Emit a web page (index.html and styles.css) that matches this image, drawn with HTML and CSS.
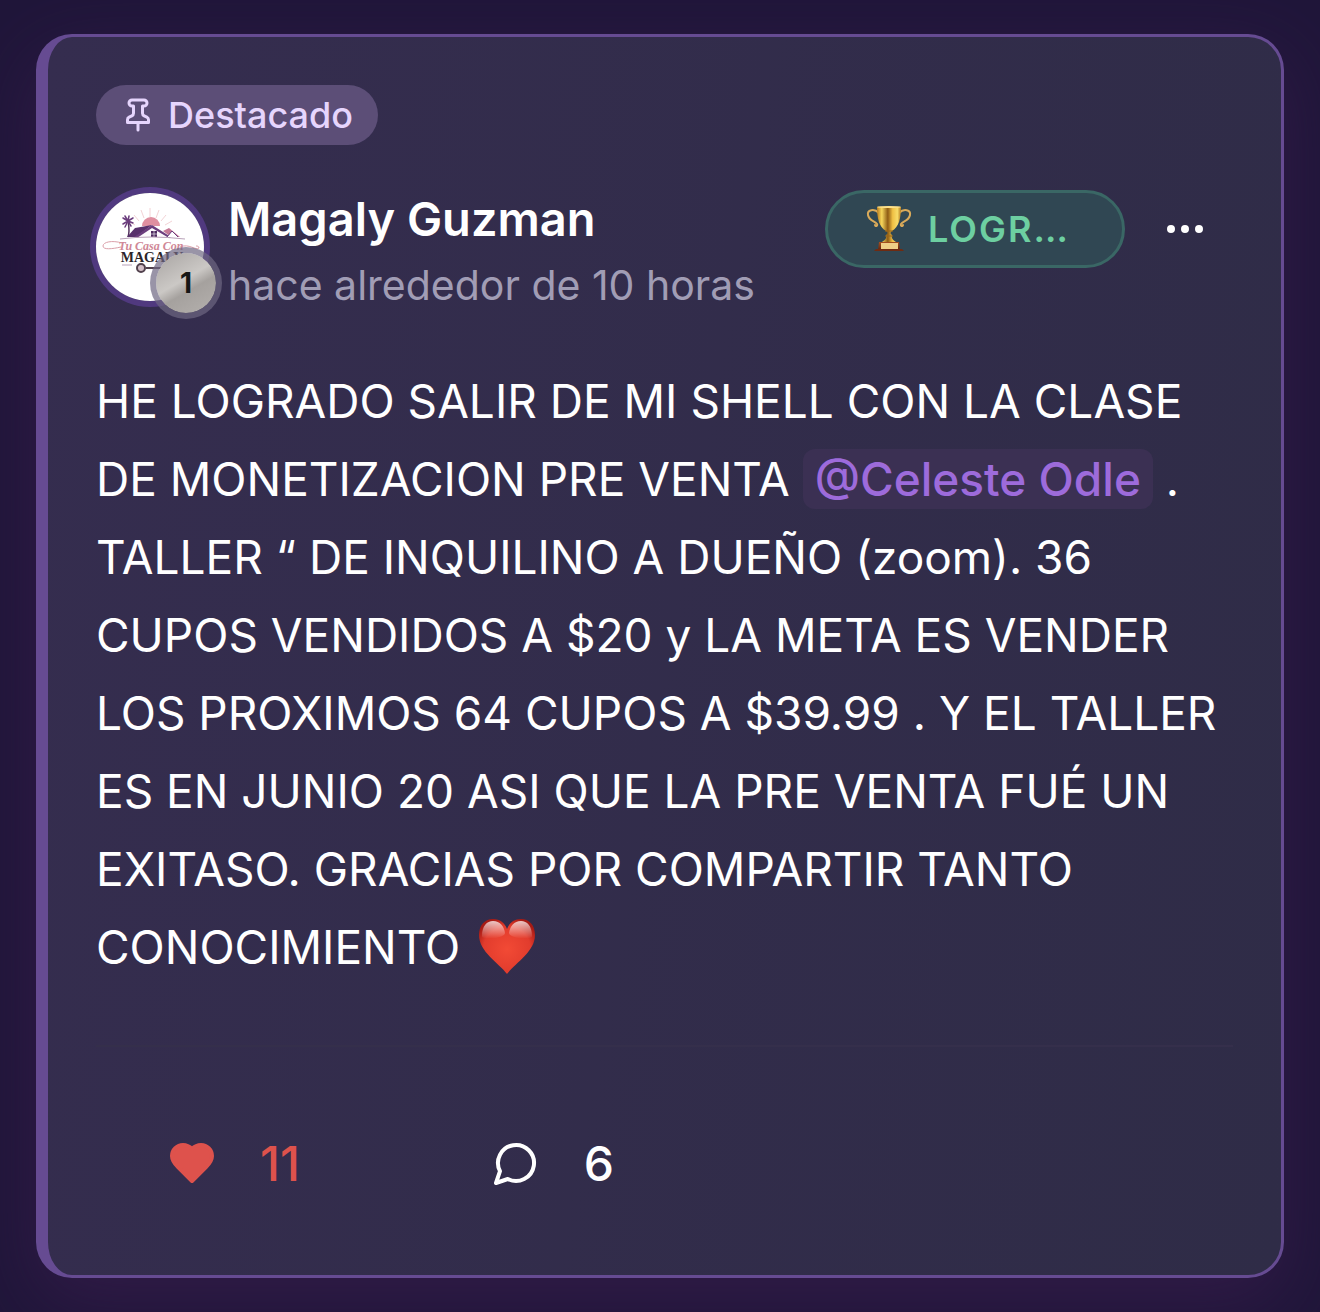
FILE: index.html
```html
<!DOCTYPE html>
<html lang="es">
<head>
  <meta charset="UTF-8">
  <meta name="viewport" content="width=device-width, initial-scale=1.0">
  <title>Publicación destacada</title>
  <link rel="stylesheet" href="styles.css">
</head>
<body>
  <article class="post">
    <div class="pinned">
      <svg class="pin-icon" viewBox="0 0 24 24" aria-hidden="true">
        <path d="M12 17v5"/>
        <path d="M5 17h14v-1.76a2 2 0 0 0-1.11-1.79l-1.78-.9A2 2 0 0 1 15 10.76V6h1a2 2 0 0 0 0-4H8a2 2 0 0 0 0 4h1v4.76a2 2 0 0 1-1.11 1.79l-1.78.9A2 2 0 0 0 5 15.24Z"/>
      </svg>
      <span>Destacado</span>
    </div>

    <header class="post-header">
      <div class="avatar">
        <svg class="avatar-img" viewBox="0 0 108 108" role="img" aria-label="Tu Casa Con Magaly">
          <circle cx="54" cy="54" r="54" fill="#fff"/>
          <!-- sol -->
          <g stroke="#f3d3d6" stroke-width="1">
            <path d="M54 24v-9M48 25l-3-8M60 25l3-8M43 28l-5-6M65 28l5-6M39 32l-7-4M69 32l7-4"/>
          </g>
          <path d="M46 33a9 9 0 0 1 18 0z" fill="#df8fa0"/>
          <!-- palmera -->
          <path d="M32 44c2-6 1-10 0-16" fill="none" stroke="#553460" stroke-width="1.5"/>
          <path d="M32 28l-5-3M32 28l-5 3M32 28l-3 6M32 28l3 5M32 28l5 2M32 28l5-3M32 28l1-5M32 28l-3-5" fill="none" stroke="#6b3d7d" stroke-width="1.5" stroke-linecap="round"/>
          <!-- casa -->
          <path d="M31 44l8-9 17-3-14 12z" fill="#58306b"/>
          <path d="M56 32L40 44h33z" fill="#fdfafc"/>
          <path d="M38 44l18-12 19 12-2 1-17-10-15 10z" fill="#6b3d7d"/>
          <path d="M67 38l6-3 11 9H75z" fill="#c47896"/>
          <path d="M71 44l5-6 6 6" fill="#fff" stroke="#6b3d7d"/>
          <path d="M55 38h6v6h-6z" fill="#4e2b60"/>
          <path d="M58 38v6M55 41h6" stroke="#fff" stroke-width=".6"/>
          <path d="M24 46q30-4 65 0" fill="none" stroke="#b9a2b9" stroke-width="1"/>
          <!-- rótulo -->
          <path d="M26 50c-10-3-19-1-19 3 0 4 9 3 18 1M84 54c9-4 16 4 19 1 0-2-2-2-3-2" fill="none" stroke="#dba0aa" stroke-width="1"/>
          <text class="logo-script" x="55" y="57" text-anchor="middle">Tu Casa Con</text>
          <text class="logo-name" x="56" y="69" text-anchor="middle">MAGALY</text>
          <path d="M26 72h10M68 73h12" stroke="#b9a2b9"/>
          <circle cx="45" cy="75" r="4" fill="#d3c0c8" stroke="#51414d" stroke-width="2"/>
          <path d="M50 75h22" stroke="#51414d" stroke-width="2"/>
        </svg>
        <span class="level">1</span>
      </div>
      <div class="author">
        <h2 class="name">Magaly Guzman</h2>
        <time class="time">hace alrededor de 10 horas</time>
      </div>
      <div class="category">
        <svg class="trophy" viewBox="0 0 48 48" aria-hidden="true">
          <defs>
            <linearGradient id="gold" x1="0" x2="1" y1="0" y2="0">
              <stop offset="0" stop-color="#b87a1c"/>
              <stop offset=".2" stop-color="#f6d75c"/>
              <stop offset=".45" stop-color="#8f5c14"/>
              <stop offset=".65" stop-color="#efc044"/>
              <stop offset=".85" stop-color="#f8dc68"/>
              <stop offset="1" stop-color="#b47a1e"/>
            </linearGradient>
            <linearGradient id="wood" x1="0" x2="0" y1="0" y2="1">
              <stop offset="0" stop-color="#a8501f"/>
              <stop offset="1" stop-color="#5e230e"/>
            </linearGradient>
          </defs>
          <path d="M14 8C9 3 2 5 3 10c1 6 7 6 9 9 1 2-2 3-2 1M34 8c5-5 12-3 11 2-1 6-7 6-9 9-1 2 2 3 2 1" fill="none" stroke="#d9aa5a" stroke-width="2" stroke-linecap="round"/>
          <path d="M12 2h24c0 11-2 20-9 24-2 1-2 3 0 4-1 3 1 5 4 7H17c3-2 5-4 4-7 2-1 2-3 0-4-7-4-9-13-9-24z" fill="url(#gold)"/>
          <ellipse cx="24" cy="2" rx="12" ry="1" fill="#ffe18a"/>
          <path d="M20 26h8M20 31h8" stroke="#9c671b" stroke-width="1"/>
          <path d="M14 37h20l1 8H13z" fill="url(#wood)"/>
          <path d="M16 38h17v6H16z" fill="#efcf86"/>
          <path d="M11 44h26l2 2H9z" fill="#6f2b12"/>
        </svg>
        <span>LOGR…</span>
      </div>
      <button class="more" type="button" aria-label="Más opciones">
        <svg class="icon" viewBox="0 0 24 24" aria-hidden="true">
          <circle cx="5" cy="12" r="1"/>
          <circle cx="12" cy="12" r="1"/>
          <circle cx="19" cy="12" r="1"/>
        </svg>
      </button>
    </header>

    <p class="content">
      HE LOGRADO SALIR DE MI SHELL CON LA CLASE DE MONETIZACION PRE VENTA <a class="mention" href="#">@Celeste Odle</a> . TALLER “ DE INQUILINO A DUEÑO (zoom). 36 CUPOS VENDIDOS A $20 y LA META ES VENDER LOS PROXIMOS 64 CUPOS A $39.99 . Y EL TALLER ES EN JUNIO 20 ASI QUE LA PRE VENTA FUÉ UN EXITASO. GRACIAS POR COMPARTIR TANTO CONOCIMIENTO
      <svg class="emoji" viewBox="0 0 60 60" role="img" aria-label="corazón">
        <defs>
          <radialGradient id="heartFill" cx=".5" cy=".55" r=".6">
            <stop offset="0" stop-color="#f24a35"/>
            <stop offset=".7" stop-color="#e23c2d"/>
            <stop offset="1" stop-color="#a61a14"/>
          </radialGradient>
          <linearGradient id="heartShine" x1="0" x2="0" y1="0" y2="1">
            <stop offset="0" stop-color="#fff" stop-opacity=".75"/>
            <stop offset="1" stop-color="#fff" stop-opacity="0"/>
          </linearGradient>
        </defs>
        <path d="M30 58C22 47 2 36 2 19 2 9 8 3 16 3c7 0 12 4 14 10 2-6 7-10 14-10 8 0 14 6 14 16 0 17-20 28-28 39z" fill="url(#heartFill)"/>
        <path d="M5 20C5 10 10 5 16 5c7 0 11 5 12 12 0 5-23 8-23 3zM55 20C55 10 50 5 44 5c-7 0-11 5-12 12 0 5 23 8 23 3z" fill="url(#heartShine)"/>
      </svg>
    </p>

    <footer class="actions">
      <button class="action liked" type="button" aria-label="Me gusta">
        <svg class="icon" viewBox="0 0 24 24" aria-hidden="true">
          <path d="M19 14c1.49-1.46 3-3.21 3-5.5A5.5 5.5 0 0 0 16.5 3c-1.76 0-3 .5-4.5 2-1.5-1.5-2.74-2-4.5-2A5.5 5.5 0 0 0 2 8.5c0 2.3 1.5 4.05 3 5.5l7 7Z"/>
        </svg>
        <span>11</span>
      </button>
      <button class="action" type="button" aria-label="Comentarios">
        <svg class="icon" viewBox="0 0 24 24" aria-hidden="true">
          <path d="M7.9 20A9 9 0 1 0 4 16.1L2 22Z"/>
        </svg>
        <span>6</span>
      </button>
    </footer>
  </article>
</body>
</html>
```

FILE: styles.css
```css
* {
  box-sizing: border-box;
}
body {
  margin: 0;
  padding: 34px 36px;
  background: #20163a;
  color: #fff;
  font-family: Inter, "Liberation Sans", sans-serif;
  font-size: 48px;
}
button {
  border: none;
  padding: 0;
  background: none;
  color: inherit;
  font: inherit;
  cursor: pointer;
}
.post {
  padding: 48px;
  border: 3px solid #664b92;
  border-left-width: 12px;
  border-radius: 36px;
  background: linear-gradient(100deg, #352d4f, #2f2c47);
  box-shadow: 0 24px 72px rgba(66, 32, 84, 0.5);
}
.pinned {
  display: inline-flex;
  align-items: center;
  gap: 12px;
  height: 60px;
  padding: 0 25px 0 24px;
  border-radius: 30px;
  background: #5c4e77;
  color: #e6d5fd;
  font-size: 36px;
  font-weight: 500;
  vertical-align: top;
}
.pin-icon {
  width: 36px;
  height: 36px;
}
.pin-icon,
.icon {
  fill: none;
  stroke: currentColor;
  stroke-width: 2;
  stroke-linecap: round;
  stroke-linejoin: round;
}
.icon {
  width: 48px;
  height: 48px;
}

.post-header {
  display: flex;
  align-items: flex-start;
  margin-top: 36px;
}
.avatar {
  position: relative;
  width: 108px;
  height: 108px;
  margin-top: 12px;
  border-radius: 50%;
  box-shadow: 0 0 0 6px #50397f;
}
.avatar-img {
  display: block;
}
.logo-script {
  fill: #cf8796;
  font: italic bold 12px "Liberation Serif", serif;
}
.logo-name {
  fill: #2b2529;
  font: bold 14px "Liberation Serif", serif;
}
.level {
  position: absolute;
  right: -18px;
  bottom: -18px;
  width: 72px;
  height: 72px;
  border: 6px solid rgba(110, 102, 130, 0.7);
  border-radius: 50%;
  background: linear-gradient(150deg, #a8a4a2, #cbc8c5 45%, #a5a19e 60%, #b5b1ae) padding-box;
  color: #161616;
  font-size: 28px;
  font-weight: 700;
  line-height: 60px;
  text-align: center;
}
.author {
  flex: 1;
  margin-left: 24px;
  padding-top: 8px;
}
.name {
  margin: 0;
  font-size: 47px;
  font-weight: 600;
  line-height: 60px;
}
.time {
  display: block;
  margin-top: 6px;
  color: #a19db5;
  font-size: 41px;
  line-height: 60px;
}
.category {
  display: flex;
  align-items: center;
  gap: 15px;
  width: 300px;
  height: 78px;
  margin-top: 9px;
  padding-left: 37px;
  border: 3px solid #3a6765;
  border-radius: 39px;
  background: #304753;
  color: #6dcfa1;
  font-size: 36px;
  font-weight: 600;
  letter-spacing: 2px;
}
.trophy {
  width: 48px;
  height: 48px;
}
.more {
  display: flex;
  align-items: center;
  justify-content: center;
  width: 96px;
  height: 96px;
  margin-left: 12px;
}

.content {
  margin: 47px 0 0;
  font-size: 46px;
  line-height: 78px;
}
.mention {
  padding: 2px 12px;
  border-radius: 12px;
  background: #3b3053;
  color: #9d6bdb;
  font-weight: 500;
  text-decoration: none;
}
.emoji {
  width: 60px;
  height: 60px;
  margin-left: 4px;
  vertical-align: -12px;
}

.actions {
  display: flex;
  gap: 48px;
  margin-top: 59px;
  padding: 68px 0 16px;
  border-top: 2px solid #352f4b;
}
.action {
  display: flex;
  align-items: center;
  gap: 44px;
  height: 96px;
  padding: 0 72px;
  font-weight: 500;
}
.liked {
  color: #de524c;
}
.liked .icon {
  fill: currentColor;
}
```
